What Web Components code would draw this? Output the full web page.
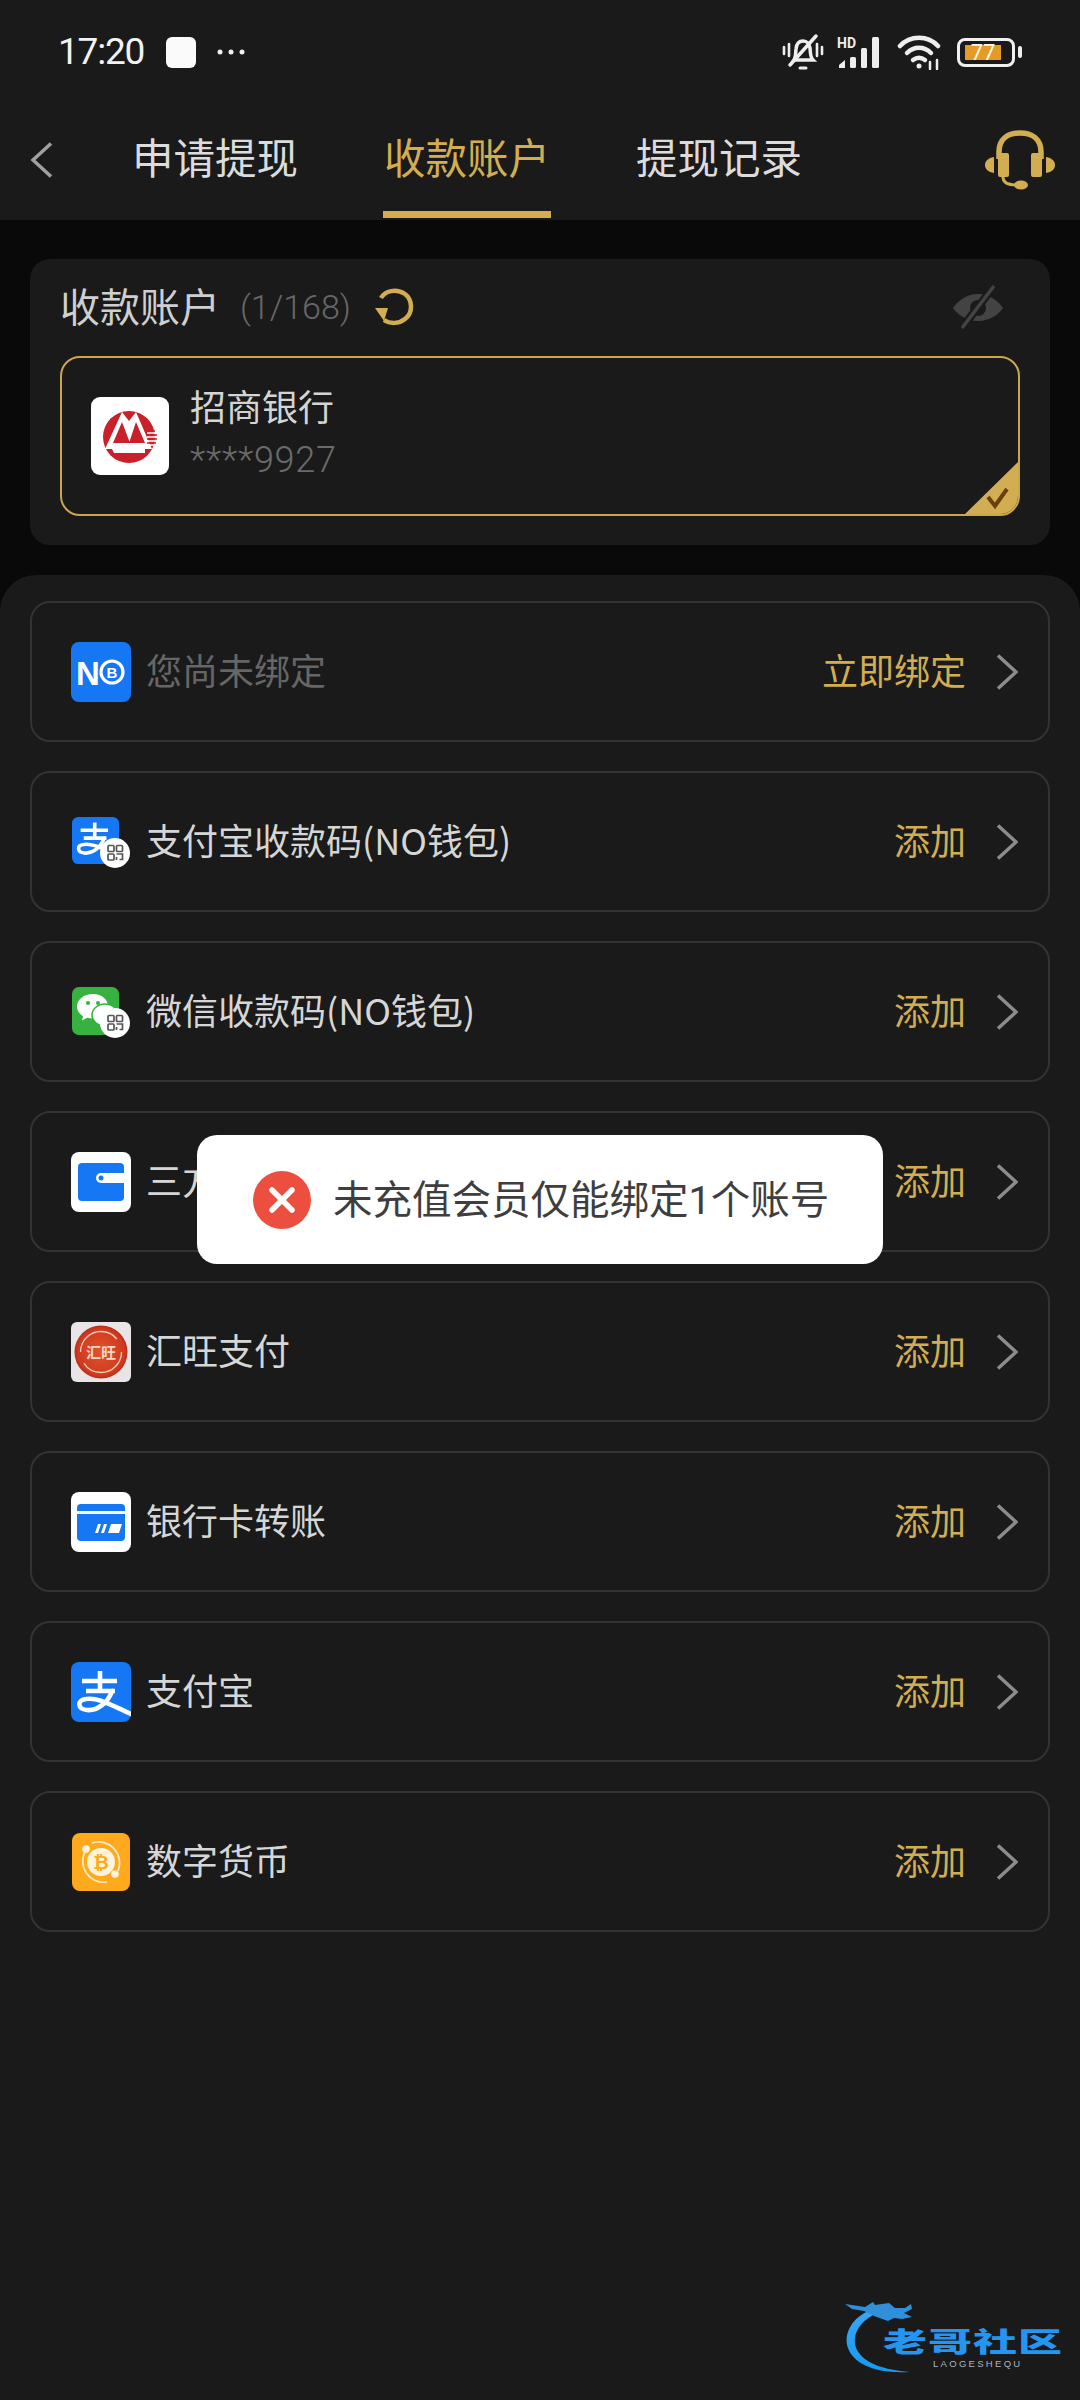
<!DOCTYPE html>
<html lang="zh-CN">
<head>
<meta charset="utf-8">
<title>收款账户</title>
<style>
html,body{margin:0;padding:0;background:#090909;}
body{width:1080px;height:2400px;overflow:hidden;font-family:Roboto,"Noto Sans CJK SC",sans-serif;color:#d8d8d8;}
</style>
</head>
<body>
<app-shell>
  <top-header></top-header>
  <account-card></account-card>
  <pay-sheet>
    <pay-row icon="no" action="立即绑定" muted>您尚未绑定</pay-row>
    <pay-row icon="aliqr" action="添加">支付宝收款码(NO钱包)</pay-row>
    <pay-row icon="wxqr" action="添加">微信收款码(NO钱包)</pay-row>
    <pay-row icon="wallet" action="添加">三方支付</pay-row>
    <pay-row icon="hw" action="添加">汇旺支付</pay-row>
    <pay-row icon="card" action="添加">银行卡转账</pay-row>
    <pay-row icon="ali" action="添加">支付宝</pay-row>
    <pay-row icon="coin" action="添加">数字货币</pay-row>
  </pay-sheet>
  <toast-message>未充值会员仅能绑定1个账号</toast-message>
  <water-mark></water-mark>
</app-shell>
<script>
const QR = `<circle cx="44" cy="41" r="15" fill="#fff"/><g fill="none" stroke="#555" stroke-width="1.7"><rect x="37" y="33.5" width="6" height="6" rx="1"/><rect x="45.5" y="33.5" width="6" height="6" rx="1"/><rect x="37" y="42" width="6" height="6" rx="1"/><path d="M45.5 42h6v5.5h-3M45.5 45v3"/></g>`;
const ALI = `<g fill="none" stroke="#fff" stroke-linecap="butt"><path stroke-width="4.600" d="M11 17h35M15 27h29M29 7v20"/><path stroke-width="4.600" stroke-linecap="round" d="M41 27C37 39 26 47 16 46 6 45 6 36 15 35 27 33 40 41 60 50"/></g>`;
const ICONS = {
  no:`<rect width="60" height="60" rx="8" fill="#1677f5"/><text x="5" y="43" font-family="Liberation Sans,sans-serif" font-weight="700" font-size="33" fill="#fff">N</text><circle cx="41" cy="30" r="11" fill="none" stroke="#fff" stroke-width="3.2"/><text x="41" y="36" text-anchor="middle" font-family="Liberation Sans,sans-serif" font-weight="700" font-size="15" fill="#fff">B</text>`,
  aliqr:`<svg x="1" y="5" width="47" height="47" viewBox="0 0 60 60"><rect width="60" height="60" rx="8" fill="#1677f5"/>${ALI}</svg>${QR}`,
  wxqr:`<rect x="1" y="5" width="47" height="48" rx="7" fill="#37b13f"/><path fill="#fff" d="M22 12c-9 0-16 5.500-16 12.500 0 4 2.500 7.500 6 9.500l-1 4.500 5-2.700c2 .5 4 .7 6 .7 9 0 15-6 15-12 0-7-6-12.500-15-12.500z"/><circle cx="17" cy="21" r="2" fill="#37b13f"/><circle cx="27" cy="21" r="2" fill="#37b13f"/><ellipse cx="34" cy="33" rx="13" ry="11" fill="#fff" stroke="#37b13f" stroke-width="1.500"/>${QR}`,
  wallet:`<rect width="60" height="60" rx="8" fill="#fff"/><rect x="7" y="11" width="46" height="38" rx="4" fill="#1677f5"/><path fill="#fff" d="M30 21h23v10H30a5 5 0 0 1 0-10z"/><circle cx="30" cy="26" r="2.500" fill="#1677f5"/>`,
  hw:`<defs><radialGradient id="hwg" cx=".5" cy=".5" r=".55"><stop offset="0" stop-color="#e2542c"/><stop offset=".8" stop-color="#cf3a20"/><stop offset="1" stop-color="#a3221a"/></radialGradient></defs><rect width="60" height="60" rx="6" fill="#e9e4e6"/><circle cx="30" cy="30" r="26.500" fill="url(#hwg)"/><circle cx="30" cy="30" r="20.500" fill="none" stroke="#f6cdb8" stroke-width="1.300" stroke-dasharray="52 12 50 15"/><text x="30" y="36" text-anchor="middle" font-family="Noto Sans CJK SC,sans-serif" font-size="15" font-weight="700" fill="#f8d8c2">汇旺</text>`,
  card:`<rect width="60" height="60" rx="8" fill="#fff"/><path fill="#1677f5" d="M6 19v-3a4 4 0 0 1 4-4h40a4 4 0 0 1 4 4v3z"/><path fill="#1677f5" d="M6 22h48v23a4 4 0 0 1-4 4H10a4 4 0 0 1-4-4z"/><path fill="#fff" d="M27 32h3l-3 9h-3zM33 32h3l-3 9h-3zM40 32h11l-3 9H37z"/>`,
  ali:`<rect width="60" height="60" rx="8" fill="#1677f5"/><g transform="translate(0 2)">${ALI}</g>`,
  coin:`<rect x="1" y="1" width="58" height="58" rx="8" fill="#ffa91c"/><g fill="none" stroke="#ffe9bf" stroke-width="1.700"><path d="M15 18A21 21 0 0 0 36 50"/><path d="M21 11A21 21 0 0 1 47 39"/></g><circle cx="30" cy="30" r="14" fill="#fff3dc"/><circle cx="15" cy="17" r="3.800" fill="#fff3dc"/><circle cx="44" cy="42" r="3.800" fill="#fff3dc"/><text x="30" y="37" text-anchor="middle" font-family="Liberation Sans,sans-serif" font-weight="700" font-size="19" fill="#ffa91c">₿</text>`
};

class Base extends HTMLElement {
  render(html){ this.attachShadow({mode:'open'}).innerHTML = html; }
}

customElements.define('app-shell', class extends Base {
  connectedCallback(){ this.render(`<style>:host{display:block;position:relative;width:1080px;height:2400px;overflow:hidden;background:#090909}</style><slot></slot>`); }
});

customElements.define('status-bar', class extends Base {
  connectedCallback(){ this.render(`<style>
  :host{display:flex;height:105px;box-sizing:border-box;padding:30px 58px 0;align-items:flex-start;color:#f2f2f2}
  .left{display:flex;align-items:center;height:44px;gap:21px}
  .time{font:400 37px/44px Roboto,sans-serif;letter-spacing:-1.2px;width:87px}
  .chip{width:30px;height:31px;border-radius:6px;background:#fafafa}
  .right{margin-left:auto;display:flex;align-items:center;height:44px}
  svg{display:block}
  .bat{position:relative;width:58px;height:29px;box-sizing:border-box;border:3px solid #f0f0f0;border-radius:8px;margin-left:14px;padding:4px 5px;display:flex}
  .fill{width:36px;background:#e49b27;color:#fff7e6;font:400 22px/16px Roboto,sans-serif;text-align:center}
  .nub{width:4px;height:12px;background:#eee;border-radius:2px;margin-left:3px}
  </style>
  <div class="left"><span class="time">17:20</span><span class="chip"></span>
    <svg width="28" height="6" viewBox="0 0 28 6"><g fill="#f0f0f0"><circle cx="3" cy="3" r="2.500"/><circle cx="14" cy="3" r="2.500"/><circle cx="25" cy="3" r="2.500"/></g></svg>
  </div>
  <div class="right">
    <svg width="44" height="38" viewBox="0 0 44 38" fill="none" stroke="#eee" stroke-width="3.500" stroke-linecap="round"><path d="M13 27c2-3 1.500-7 2-11 .5-5 3-8 7-8s6.500 3 7 7c.5 4 0 9 3 12H13z"/><path d="M9 32L35 3"/><path d="M3 14v7M8 11v12M36 11v12M41 14v7" stroke-width="2.600"/><path d="M19 35h6" stroke-width="3"/></svg>
    <svg style="margin-left:12px" width="50" height="32" viewBox="0 0 50 32"><text x="0" y="12" font-family="Roboto,sans-serif" font-weight="700" font-size="14" fill="#eee">HD</text><g fill="#eee"><path d="M2 32v-3l6-5v8z"/><rect x="13" y="21" width="6" height="11" rx="1.500"/><rect x="24" y="12" width="6" height="20" rx="1.500"/><rect x="35" y="1" width="7" height="31" rx="1.500"/></g></svg>
    <svg style="margin-left:10px" width="46" height="36" viewBox="0 0 46 36" fill="none" stroke="#eee" stroke-width="4.500" stroke-linecap="round"><path d="M3 12C13 1 31 1 41 12"/><path d="M10 19c7-7 17-7 24 0"/><path d="M16 26c4-3 8-3 12 0"/><circle cx="22" cy="32" r="2.500" fill="#eee" stroke="none"/><path d="M33 28v7M40 26v9" stroke-width="2.500"/></svg>
    <div class="bat"><div class="fill">77</div></div><div class="nub"></div>
  </div>`); }
});

customElements.define('nav-tabs', class extends Base {
  connectedCallback(){ this.render(`<style>
  :host{display:flex;height:115px;box-sizing:border-box;padding-left:30px;padding-right:24px;align-items:flex-start;font:400 41.500px/56px "Noto Sans CJK SC",sans-serif;color:#dcdcdc}
  .back{margin-top:37px;margin-right:78px;display:block}
  .tabs{display:flex;gap:84px}
  .tab{width:168px;text-align:center;padding:23px 0 27px;border-bottom:7px solid transparent;white-space:nowrap}
  .tab.on{color:#d3ad52;border-bottom-color:#d3ad52}
  .hs{margin-left:auto;margin-top:25px;display:block}
  </style>
  <svg class="back" width="23" height="36" viewBox="0 0 23 36" fill="none" stroke="#a0a0a0" stroke-width="3.500"><path d="M21 1.500L3 18l18 16.500"/></svg>
  <div class="tabs"><div class="tab">申请提现</div><div class="tab on">收款账户</div><div class="tab">提现记录</div></div>
  <svg class="hs" width="72" height="60" viewBox="0 0 72 60" fill="none"><path d="M15 29V22C15 9 24 3 36 3s21 6 21 19v7" stroke="#d3ad52" stroke-width="5.500"/><rect x="14" y="23" width="11" height="24" rx="2" fill="#d3ad52"/><rect x="47" y="23" width="11" height="24" rx="2" fill="#d3ad52"/><path d="M10 27C4 28 1 31 1 35s3 7 9 8zM62 27c6 1 9 4 9 8s-3 7-9 8z" fill="#d3ad52"/><path d="M19 47c0 6 6 8 14 8" stroke="#d3ad52" stroke-width="3"/><ellipse cx="37" cy="55" rx="7" ry="4.500" fill="#d3ad52"/></svg>`); }
});

customElements.define('top-header', class extends Base {
  connectedCallback(){ this.render(`<style>:host{display:block;height:220px;background:#1a1a1a}</style><status-bar></status-bar><nav-tabs></nav-tabs>`); }
});

customElements.define('account-card', class extends Base {
  connectedCallback(){ this.render(`<style>
  :host{display:block;box-sizing:border-box;margin:39px 30px 0;height:286px;background:#1a1a1a;border-radius:20px;padding:20px 30px 0}
  .head{display:flex;align-items:center;height:56px}
  h2{margin:0;font:400 40px/52px "Noto Sans CJK SC",sans-serif;color:#cfcfcf;width:180px;padding-bottom:4px;white-space:nowrap}
  .cnt{font:300 34px/56px Roboto,sans-serif;color:#686868;width:133px}
  .eye{margin-left:auto;margin-right:16px;display:block}
  .sel{position:relative;overflow:hidden;box-sizing:border-box;height:160px;margin-top:21px;border:2px solid #c9a64f;border-radius:20px;display:flex;align-items:center;padding-left:29px}
  .logo{display:block;width:78px;height:78px;flex:none}
  .txt{margin-left:21px;margin-top:-3px}
  .nm{font:400 36px/44px "Noto Sans CJK SC",sans-serif;color:#d4d4d4;position:relative;top:-3px}
  .no{font:300 36px/48px Roboto,"Noto Sans CJK SC",sans-serif;letter-spacing:.7px;color:#6b6b6b;margin-top:6px}
  .tick{position:absolute;right:-2px;bottom:-2px;display:block}
  </style>
  <div class="head"><h2>收款账户</h2><span class="cnt">(1/168)</span>
    <svg width="42" height="40" viewBox="0 0 42 40" fill="none" stroke="#d3ad52" stroke-width="4.500"><path d="M8 11C12 4 23 1 32 7c8 6 8 19 0 25-6 5-15 5-21 1"/><path fill="#d3ad52" stroke="none" d="M2 21h13l-4 13z"/></svg>
    <svg class="eye" width="52" height="44" viewBox="0 0 52 44"><path fill="#434343" d="M26 9C14 9 5 17 1 23c4 6 13 13 25 13s21-7 25-13c-4-6-13-14-25-14z"/><circle cx="26" cy="23" r="8" fill="#1a1a1a"/><path d="M42 1L10 43" stroke="#1a1a1a" stroke-width="8"/><path d="M42 1L10 43" stroke="#434343" stroke-width="3.500"/></svg>
  </div>
  <div class="sel">
    <svg class="logo" viewBox="0 0 78 78"><rect width="78" height="78" rx="9" fill="#fff"/><circle cx="38" cy="40" r="26" fill="#c9202a"/><path fill="#fff" d="M31 15l7 9 7-9 16 37H14z"/><path fill="#c9202a" d="M31 25l8 21H22zM45 25l9 21H38z"/><path fill="#fff" d="M21 52h33v4H23z"/><path stroke="#fff" stroke-width="1.300" d="M56 36h10M56 40h10M56 44h10M56 48h10"/><path stroke="#c9202a" stroke-width="1.300" d="M56 34h8M56 38h10M56 42h10M56 46h9"/></svg>
    <div class="txt"><div class="nm">招商银行</div><div class="no">****9927</div></div>
    <svg class="tick" width="57" height="56" viewBox="0 0 57 56"><path fill="#d3ad52" d="M57 0V40a16 16 0 0 1-16 16H0z"/><path d="M25 37l7 9 12-17" fill="none" stroke="#6b3f0c" stroke-width="4"/></svg>
  </div>`); }
});

customElements.define('pay-sheet', class extends Base {
  connectedCallback(){ this.render(`<style>:host{display:flex;flex-direction:column;gap:29px;margin-top:30px;box-sizing:border-box;height:1825px;background:#1a1a1a;border-radius:36px 36px 0 0;padding:26px 30px 0}</style><slot></slot>`); }
});

customElements.define('pay-row', class extends Base {
  connectedCallback(){
    const muted = this.hasAttribute('muted');
    this.render(`<style>
    :host{display:flex;box-sizing:border-box;height:141px;border:2px solid #333;border-radius:20px;align-items:center;padding:0 30px 0 39px;font:400 36px/44px "Noto Sans CJK SC",sans-serif;color:${muted?'#666':'#d6d6d6'}}
    .ic{display:block;width:60px;height:60px;flex:none;margin-right:15px}
    .lbl{flex:1;padding-bottom:6px}
    .act{color:#d3ad52;margin-right:30px;padding-bottom:6px}
    .chev{display:block}
    </style>
    <svg class="ic" viewBox="0 0 60 60">${ICONS[this.getAttribute('icon')]}</svg>
    <span class="lbl"><slot></slot></span>
    <span class="act">${this.getAttribute('action')}</span>
    <svg class="chev" width="22" height="36" viewBox="0 0 22 36" fill="none" stroke="#8c8c8c" stroke-width="3.500"><path d="M2 1.500L20 18 2 34.500"/></svg>`);
  }
});

customElements.define('toast-message', class extends Base {
  connectedCallback(){ this.render(`<style>
  :host{position:absolute;left:197px;top:1135px;width:686px;height:129px;box-sizing:border-box;background:#fff;border-radius:20px;display:flex;align-items:center;padding:0 0 0 56px;font:400 39.500px/54px Roboto,"Noto Sans CJK SC",sans-serif;color:#3e3e3e}
  svg{display:block;flex:none;margin-right:22px}
  span{padding-top:3px}
  </style>
  <svg width="58" height="58" viewBox="0 0 58 58"><circle cx="29" cy="29" r="29" fill="#ec4f3f"/><path d="M19 19l20 20M39 19L19 39" stroke="#fff" stroke-width="5.500" stroke-linecap="round"/></svg><span><slot></slot></span>`); }
});

customElements.define('water-mark', class extends Base {
  connectedCallback(){ this.render(`<style>
  :host{position:absolute;left:840px;top:2300px;width:230px;height:80px;display:block}
  svg{position:absolute;left:0;top:0}
  .t{position:absolute;left:43px;top:27px;font:900 44px/27px "Noto Sans CJK SC",sans-serif;letter-spacing:1px;white-space:nowrap;color:#2496f2;transform:scaleY(.62);transform-origin:50% 50%}
  .s{position:absolute;left:93px;top:58px;font:400 9.500px/12px "Liberation Sans",sans-serif;letter-spacing:2.300px;color:#a9b6c0;white-space:nowrap}
  </style>
  <svg width="90" height="80" viewBox="0 0 90 80"><defs><linearGradient id="wg" x1="0" y1="0" x2="0" y2="1"><stop offset="0" stop-color="#3aa6f5"/><stop offset="1" stop-color="#149af0"/></linearGradient></defs><path fill="url(#wg)" d="M31 10C12 17 3 34 8 48c5 15 26 26 62 24-26-2-46-9-53-22-6-12 0-27 18-36z"/><path fill="#2f8fd8" d="M5 4l20 3 8-5 2 3 14-2 6 5 10 0 6-4 1 5-8 4 8 4-10 2-8-1-6 3-14-5-10-5-12-2z"/></svg>
  <div class="t">老哥社区</div><div class="s">LAOGESHEQU</div>`); }
});
</script>
</body>
</html>
